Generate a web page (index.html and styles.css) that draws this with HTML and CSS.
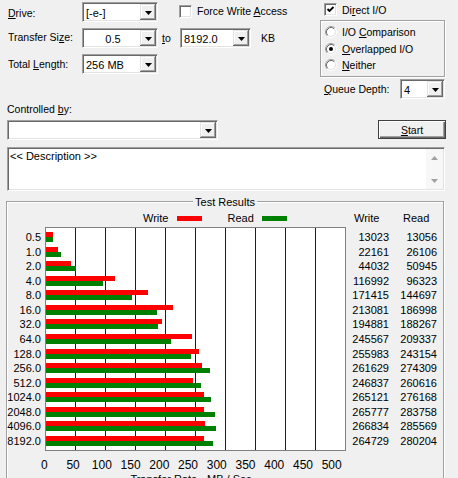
FILE: index.html
```html
<!DOCTYPE html>
<html lang="en">
<head>
    <meta charset="UTF-8">
    <title>Disk Benchmark</title>
    <link rel="stylesheet" href="styles.css">
</head>
<body>
    <div class="app">
        <div class="top">
            <div class="settings">
                <div class="row">
                    <span class="label label-drive"><u>D</u>rive:</span>
                    <div class="combo combo-main">
                        <span class="combo-text">[-e-]</span>
                        <span class="drop"><svg width="7" height="4" viewBox="0 0 7 4"><polygon points="0,0 7,0 3.5,4" fill="#000"/></svg></span>
                    </div>
                    <div class="check check-force">
                        <span class="box"></span>
                        <span>Force Write <u>A</u>ccess</span>
                    </div>
                </div>
                <div class="row">
                    <span class="label label-size">Transfer Si<u>z</u>e:</span>
                    <div class="combo combo-main">
                        <span class="combo-text centered">0.5</span>
                        <span class="drop"><svg width="7" height="4" viewBox="0 0 7 4"><polygon points="0,0 7,0 3.5,4" fill="#000"/></svg></span>
                    </div>
                    <span class="to"><u>t</u>o</span>
                    <div class="combo combo-max">
                        <span class="combo-text">8192.0</span>
                        <span class="drop"><svg width="7" height="4" viewBox="0 0 7 4"><polygon points="0,0 7,0 3.5,4" fill="#000"/></svg></span>
                    </div>
                    <span class="unit">KB</span>
                </div>
                <div class="row">
                    <span class="label label-length">Total <u>L</u>ength:</span>
                    <div class="combo combo-main">
                        <span class="combo-text">256 MB</span>
                        <span class="drop"><svg width="7" height="4" viewBox="0 0 7 4"><polygon points="0,0 7,0 3.5,4" fill="#000"/></svg></span>
                    </div>
                </div>
            </div>
            <div class="options">
                <div class="check check-direct">
                    <span class="box"><svg width="9" height="9" viewBox="0 0 9 9"><polyline points="1.5,4 3.5,6 7.5,2" fill="none" stroke="#000" stroke-width="1.8"/></svg></span>
                    <span>Di<u>r</u>ect I/O</span>
                </div>
                <div class="modes">
                    <div class="radio">
                        <svg width="12" height="12" viewBox="0 0 12 12"><circle cx="6" cy="6" r="4.5" fill="#fff"/><path d="M2.11 9.89A5.5 5.5 0 0 1 9.89 2.11" fill="none" stroke="#a0a0a0"/><path d="M9.89 2.11A5.5 5.5 0 0 1 2.11 9.89" fill="none" stroke="#fff"/><path d="M2.82 9.18A4.5 4.5 0 0 1 9.18 2.82" fill="none" stroke="#696969"/><path d="M9.18 2.82A4.5 4.5 0 0 1 2.82 9.18" fill="none" stroke="#e3e3e3"/></svg>
                        <span>I/O <u>C</u>omparison</span>
                    </div>
                    <div class="radio">
                        <svg width="12" height="12" viewBox="0 0 12 12"><circle cx="6" cy="6" r="4.5" fill="#fff"/><path d="M2.11 9.89A5.5 5.5 0 0 1 9.89 2.11" fill="none" stroke="#a0a0a0"/><path d="M9.89 2.11A5.5 5.5 0 0 1 2.11 9.89" fill="none" stroke="#fff"/><path d="M2.82 9.18A4.5 4.5 0 0 1 9.18 2.82" fill="none" stroke="#696969"/><path d="M9.18 2.82A4.5 4.5 0 0 1 2.82 9.18" fill="none" stroke="#e3e3e3"/><circle cx="6" cy="6" r="2" fill="#000"/></svg>
                        <span><u>O</u>verlapped I/O</span>
                    </div>
                    <div class="radio">
                        <svg width="12" height="12" viewBox="0 0 12 12"><circle cx="6" cy="6" r="4.5" fill="#fff"/><path d="M2.11 9.89A5.5 5.5 0 0 1 9.89 2.11" fill="none" stroke="#a0a0a0"/><path d="M9.89 2.11A5.5 5.5 0 0 1 2.11 9.89" fill="none" stroke="#fff"/><path d="M2.82 9.18A4.5 4.5 0 0 1 9.18 2.82" fill="none" stroke="#696969"/><path d="M9.18 2.82A4.5 4.5 0 0 1 2.82 9.18" fill="none" stroke="#e3e3e3"/></svg>
                        <span><u>N</u>either</span>
                    </div>
                </div>
                <div class="queue">
                    <span class="queue-label"><u>Q</u>ueue Depth:</span>
                    <div class="combo combo-queue">
                        <span class="combo-text">4</span>
                        <span class="drop"><svg width="7" height="4" viewBox="0 0 7 4"><polygon points="0,0 7,0 3.5,4" fill="#000"/></svg></span>
                    </div>
                </div>
            </div>
        </div>

        <div class="ctl-label">Controlled <u>b</u>y:</div>
        <div class="ctl-row">
            <div class="combo combo-ctl">
                <span class="combo-text"></span>
                <span class="drop"><svg width="7" height="4" viewBox="0 0 7 4"><polygon points="0,0 7,0 3.5,4" fill="#000"/></svg></span>
            </div>
            <button class="start"><u>S</u>tart</button>
        </div>

        <div class="description">
            <div class="desc-text">&lt;&lt; Description &gt;&gt;</div>
            <div class="scrollbar">
                <span class="arrow"><svg width="7" height="4" viewBox="0 0 7 4"><polygon points="0,4 7,4 3.5,0" fill="#a0a0a0"/></svg></span>
                <span class="arrow"><svg width="7" height="4" viewBox="0 0 7 4"><polygon points="0,0 7,0 3.5,4" fill="#a0a0a0"/></svg></span>
            </div>
        </div>

        <div class="results">
            <div class="results-title">Test Results</div>
            <div class="legend">
                <span>Write</span><span class="swatch swatch-write"></span>
                <span class="legend-read">Read</span><span class="swatch swatch-read"></span>
            </div>
            <div class="head head-write">Write</div>
            <div class="head head-read">Read</div>

            <div class="ylabels">
                <div class="cell">0.5</div>
                <div class="cell">1.0</div>
                <div class="cell">2.0</div>
                <div class="cell">4.0</div>
                <div class="cell">8.0</div>
                <div class="cell">16.0</div>
                <div class="cell">32.0</div>
                <div class="cell">64.0</div>
                <div class="cell">128.0</div>
                <div class="cell">256.0</div>
                <div class="cell">512.0</div>
                <div class="cell">1024.0</div>
                <div class="cell">2048.0</div>
                <div class="cell">4096.0</div>
                <div class="cell">8192.0</div>
            </div>

            <div class="plot">
                <div class="bar-row"><div class="bar write" style="width:7px"></div><div class="bar read" style="width:7px"></div></div>
                <div class="bar-row"><div class="bar write" style="width:12px"></div><div class="bar read" style="width:15px"></div></div>
                <div class="bar-row"><div class="bar write" style="width:25px"></div><div class="bar read" style="width:30px"></div></div>
                <div class="bar-row"><div class="bar write" style="width:69px"></div><div class="bar read" style="width:57px"></div></div>
                <div class="bar-row"><div class="bar write" style="width:102px"></div><div class="bar read" style="width:86px"></div></div>
                <div class="bar-row"><div class="bar write" style="width:127px"></div><div class="bar read" style="width:111px"></div></div>
                <div class="bar-row"><div class="bar write" style="width:116px"></div><div class="bar read" style="width:112px"></div></div>
                <div class="bar-row"><div class="bar write" style="width:146px"></div><div class="bar read" style="width:125px"></div></div>
                <div class="bar-row"><div class="bar write" style="width:153px"></div><div class="bar read" style="width:145px"></div></div>
                <div class="bar-row"><div class="bar write" style="width:156px"></div><div class="bar read" style="width:164px"></div></div>
                <div class="bar-row"><div class="bar write" style="width:147px"></div><div class="bar read" style="width:155px"></div></div>
                <div class="bar-row"><div class="bar write" style="width:158px"></div><div class="bar read" style="width:165px"></div></div>
                <div class="bar-row"><div class="bar write" style="width:158px"></div><div class="bar read" style="width:169px"></div></div>
                <div class="bar-row"><div class="bar write" style="width:159px"></div><div class="bar read" style="width:170px"></div></div>
                <div class="bar-row"><div class="bar write" style="width:158px"></div><div class="bar read" style="width:167px"></div></div>
            </div>

            <div class="vals">
                <div class="cell">13023</div>
                <div class="cell">22161</div>
                <div class="cell">44032</div>
                <div class="cell">116992</div>
                <div class="cell">171415</div>
                <div class="cell">213081</div>
                <div class="cell">194881</div>
                <div class="cell">245567</div>
                <div class="cell">255983</div>
                <div class="cell">261629</div>
                <div class="cell">246837</div>
                <div class="cell">265121</div>
                <div class="cell">265777</div>
                <div class="cell">266834</div>
                <div class="cell">264729</div>
            </div>
            <div class="vals">
                <div class="cell">13056</div>
                <div class="cell">26106</div>
                <div class="cell">50945</div>
                <div class="cell">96323</div>
                <div class="cell">144697</div>
                <div class="cell">186998</div>
                <div class="cell">188267</div>
                <div class="cell">209337</div>
                <div class="cell">243154</div>
                <div class="cell">274309</div>
                <div class="cell">260616</div>
                <div class="cell">276168</div>
                <div class="cell">283758</div>
                <div class="cell">285569</div>
                <div class="cell">280204</div>
            </div>

            <div class="xaxis">
                <span>0</span><span>50</span><span>100</span><span>150</span><span>200</span><span>250</span><span>300</span><span>350</span><span>400</span><span>450</span><span>500</span>
            </div>
            <div class="xtitle">Transfer Rate - MB / Sec</div>
        </div>
    </div>
</body>
</html>
```

FILE: styles.css
```css
body {
    margin: 0;
    background-color: #f0f0f0;
    font-family: 'Liberation Sans', Arial, sans-serif;
    font-size: 10.5px;
    color: #000;
    overflow: hidden;
    white-space: nowrap;
}
u {
    text-decoration-thickness: 1px;
    text-underline-offset: 1px;
}
.app {
    width: 458px;
    height: 478px;
    overflow: hidden;
}

/* top settings */
.top {
    display: flex;
    height: 100px;
}
.settings {
    width: 320px;
    padding-top: 2px;
}
.row {
    display: flex;
    align-items: center;
    height: 20px;
    margin-bottom: 6px;
}
.label {
    box-sizing: border-box;
    width: 82px;
    padding-left: 8px;
    line-height: 14px;
}
.label-drive {
    margin-top: 1px;
}
.label-size {
    margin-top: -2px;
}
.label-length {
    margin-top: -1px;
}
.combo {
    box-sizing: border-box;
    display: flex;
    height: 20px;
    background: #fff;
    border: 1px solid;
    border-color: #a0a0a0 #fff #fff #a0a0a0;
    box-shadow: inset 1px 1px #696969, inset -1px -1px #e3e3e3;
    padding: 1px;
}
.combo-main {
    width: 76px;
}
.combo-max {
    width: 71px;
}
.combo-queue {
    width: 45px;
}
.combo-ctl {
    width: 211px;
}
.combo-text {
    flex: 1;
    padding-left: 2px;
    line-height: 16px;
    margin-top: 1px;
    font-size: 11px;
}
.combo-text.centered {
    text-align: center;
}
.drop {
    width: 16px;
    height: 16px;
    box-sizing: border-box;
    background: #f0f0f0;
    box-shadow: inset -1px -1px #696969, inset 1px 1px #e3e3e3, inset -2px -2px #a0a0a0, inset 2px 2px #fff;
    display: flex;
    align-items: center;
    justify-content: center;
}
.drop svg {
    display: block;
    margin-top: 1px;
}
.to {
    box-sizing: border-box;
    width: 22px;
    padding-left: 4px;
}
.unit {
    margin-left: 10px;
}
.check {
    display: flex;
    align-items: center;
}
.check-force {
    margin-left: 21px;
    margin-top: -2px;
}
.box {
    box-sizing: border-box;
    width: 13px;
    height: 13px;
    margin-right: 5px;
    background: #fff;
    border: 1px solid;
    border-color: #a0a0a0 #fff #fff #a0a0a0;
    box-shadow: inset 1px 1px #696969, inset -1px -1px #e3e3e3;
    display: flex;
    align-items: center;
    justify-content: center;
}
.box svg {
    display: block;
}

/* right options */
.options {
    width: 125px;
}
.check-direct {
    margin: 3px 0 0 4px;
    height: 13px;
}
.modes {
    box-sizing: border-box;
    margin-top: 4px;
    height: 57px;
    border: 1px solid #a0a0a0;
    box-shadow: inset 1px 1px #fff, 1px 1px #fff;
    padding: 3px 0 0 4px;
}
.radio {
    display: flex;
    align-items: center;
    height: 16.5px;
}
.radio svg {
    display: block;
    margin-right: 5px;
}
.queue {
    display: flex;
    align-items: center;
    margin-top: 2px;
    height: 20px;
}
.queue-label {
    box-sizing: border-box;
    width: 80px;
    padding-left: 4px;
}

/* controller + description */
.ctl-label {
    padding: 2px 0 0 7px;
    line-height: 14px;
    height: 14px;
}
.ctl-row {
    display: flex;
    margin-top: 4px;
    padding-left: 7px;
}
.start {
    box-sizing: border-box;
    margin-left: auto;
    margin-right: 12px;
    width: 68px;
    height: 19px;
    padding: 0;
    font: inherit;
    color: #000;
    background: #f0f0f0;
    border: 1px solid #404040;
    box-shadow: inset 1px 1px #fff, inset -1px -1px #696969, inset -2px -2px #a0a0a0;
}
.description {
    box-sizing: border-box;
    display: flex;
    margin: 7px 0 0 7px;
    width: 438px;
    height: 44px;
    background: #fff;
    border: 1px solid;
    border-color: #a0a0a0 #fff #fff #a0a0a0;
    box-shadow: inset 1px 1px #696969, inset -1px -1px #e3e3e3;
    padding: 1px;
}
.desc-text {
    flex: 1;
    padding-left: 1px;
    line-height: 14px;
    font-size: 11px;
}
.scrollbar {
    width: 17px;
    background: #f7f7f7;
    display: flex;
    flex-direction: column;
    justify-content: space-between;
}
.arrow {
    height: 17px;
    display: flex;
    align-items: center;
    justify-content: center;
}
.arrow svg {
    display: block;
}

/* results group */
.results {
    position: relative;
    box-sizing: border-box;
    margin: 10px 0 0 6px;
    width: 438px;
    height: 300px;
    border: 1px solid #a0a0a0;
    box-shadow: inset 1px 1px #fff, 1px 1px #fff;
    display: grid;
    grid-template-columns: 38px 301px 43px 48px;
    align-content: start;
    align-items: start;
    font-size: 11px;
}
.results-title {
    position: absolute;
    top: -7px;
    left: 50%;
    transform: translateX(-50%);
    padding: 0 2px;
    line-height: 14px;
    background: #f0f0f0;
}
.legend {
    grid-column: 1 / 3;
    display: flex;
    align-items: center;
    margin-top: 9px;
    padding-left: 136px;
    height: 14px;
    line-height: 14px;
}
.swatch {
    width: 25px;
    height: 5px;
    margin-left: 9px;
}
.swatch-write {
    background: #ff0000;
}
.swatch-read {
    background: #008000;
    margin-left: 8px;
}
.legend-read {
    margin-left: 25px;
}
.head {
    margin-top: 9px;
    height: 14px;
    line-height: 14px;
}
.head-write {
    padding-left: 8px;
}
.head-read {
    padding-left: 14px;
}
.ylabels,
.vals {
    margin-top: 2px;
    padding-top: 5px;
    text-align: right;
}
.ylabels {
    padding-right: 4px;
}
.cell {
    height: 14.57px;
    line-height: 10px;
}
.plot {
    box-sizing: border-box;
    margin-top: 2px;
    height: 224px;
    padding-top: 4px;
    overflow: hidden;
    border: 1px solid #808080;
    background-color: #fff;
    background-image: linear-gradient(90deg, transparent 29px, #0000ff 29px, #0000ff 30px, transparent 30px);
    background-size: 30px 100%;
}
.bar-row {
    height: 14.57px;
}
.bar {
    height: 5px;
}
.bar.write {
    background: #ff0000;
}
.bar.read {
    background: #008000;
}
.xaxis {
    grid-column: 1 / 3;
    display: flex;
    margin-top: 7px;
    padding-left: 23px;
    font-size: 12px;
    line-height: 14px;
}
.xaxis span {
    width: 30px;
    text-align: center;
}
.xtitle {
    grid-column: 1 / 3;
    padding-left: 29px;
    text-align: center;
    line-height: 14px;
}
```
